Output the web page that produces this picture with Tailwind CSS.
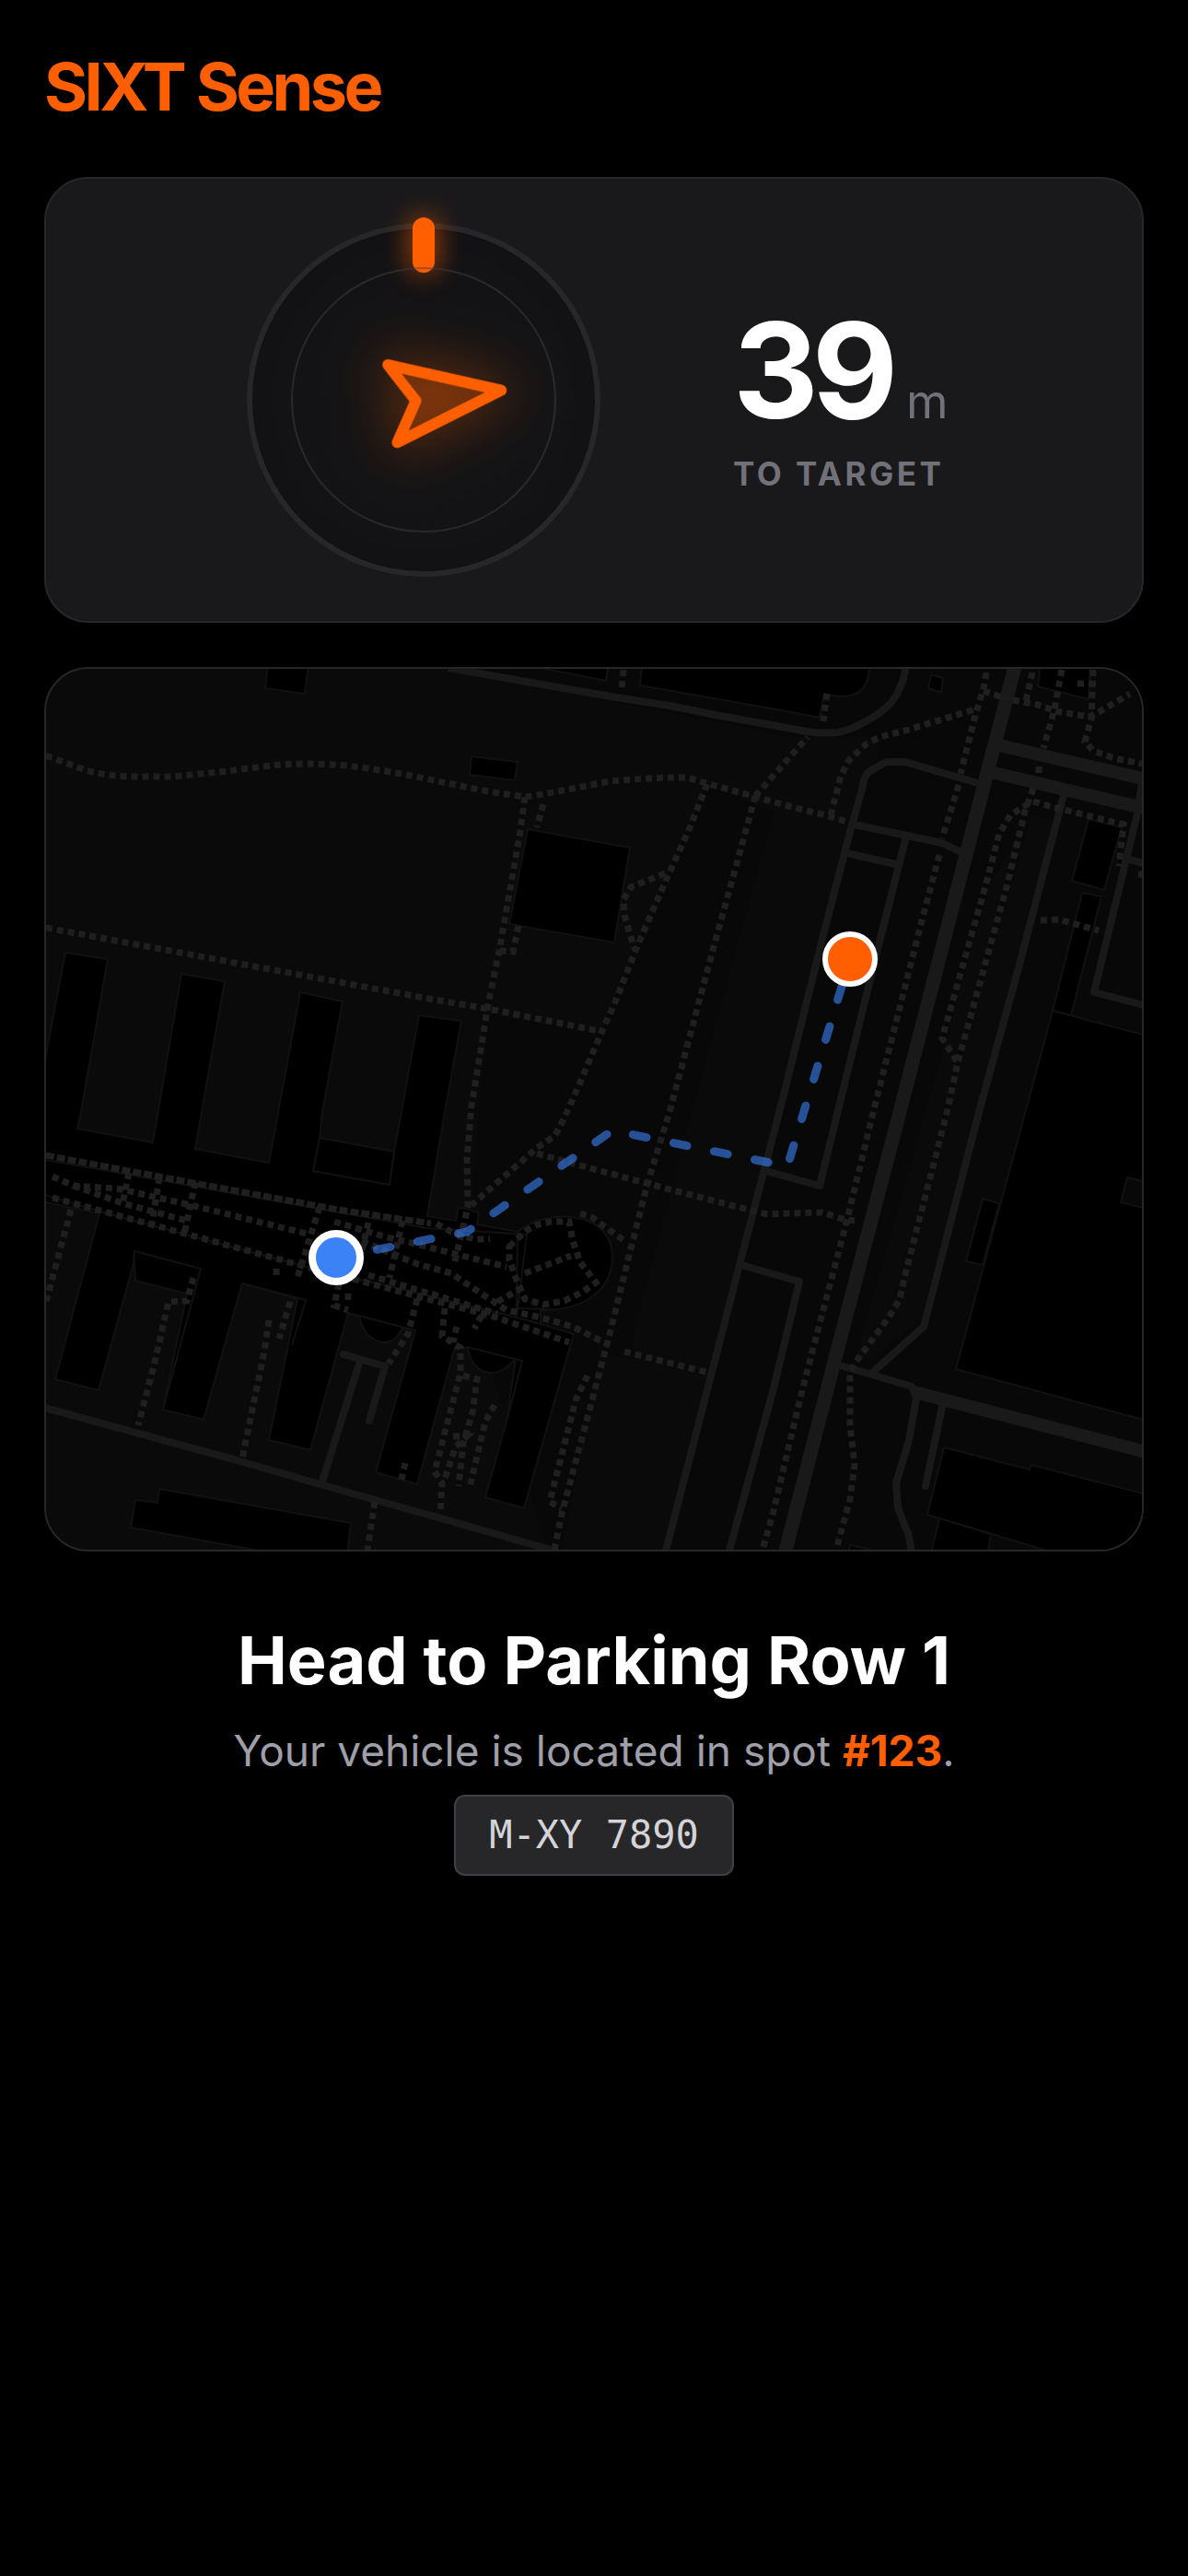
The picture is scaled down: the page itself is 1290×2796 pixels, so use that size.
<!DOCTYPE html>
<html lang="en">
<head>
    <meta charset="UTF-8">
    <meta name="viewport" content="width=device-width, initial-scale=1.0">
    <title>SIXT Sense</title>
    <script src="https://cdn.jsdelivr.net/npm/@tailwindcss/browser@4"></script>
</head>
<body class="min-h-screen bg-black p-12 font-[Inter,'Liberation_Sans',sans-serif] text-white">

    <header>
        <h1 class="text-[72px] leading-23 font-bold tracking-tighter text-[#ff5f00]">SIXT Sense</h1>
    </header>

    <main class="mt-13">

        <!-- Compass card -->
        <section class="flex items-center justify-center gap-36 rounded-[48px] border-2 border-[#27272a] bg-[#19191b] p-12">
            <div class="relative flex size-96 items-center justify-center rounded-full border-6 border-[#27272a] bg-[#131315] shadow-[inset_0_0_24px_rgba(0,0,0,0.12)]">
                <div class="absolute -top-3 h-15 w-6 rounded-full bg-[#ff5f00] shadow-[0_0_30px_rgba(255,95,0,0.8)]"></div>
                <div class="absolute size-72 rounded-full border-2 border-[#3f3f46]/50"></div>
                <svg class="size-36 rotate-[38deg] overflow-visible text-[#ff5f00] drop-shadow-[0_0_30px_rgba(255,95,0,0.6)]" viewBox="0 0 24 24" fill="currentColor" fill-opacity="0.25" stroke="currentColor" stroke-width="2" stroke-linecap="round" stroke-linejoin="round" aria-hidden="true">
                    <polygon points="3 11 22 2 13 21 11 13 3 11" />
                </svg>
            </div>
            <div class="w-[226px]">
                <p class="flex items-baseline gap-4 whitespace-nowrap">
                    <span class="text-[144px] leading-36 font-bold tracking-tighter">39</span>
                    <span class="text-[52px] leading-15 text-[#71717a]">m</span>
                </p>
                <p class="mt-4 text-[35px] leading-12 font-bold tracking-widest whitespace-nowrap text-[#71717a]">TO TARGET</p>
            </div>
        </section>

        <!-- Map -->
        <section class="relative mt-12 h-[960px] overflow-hidden rounded-[48px] border-2 border-[#27272a] bg-[#0a0a0a]">
            <svg class="size-full" viewBox="50 726 1190 956" preserveAspectRatio="xMidYMid slice" fill="none" role="img" aria-label="Map with the route to the vehicle">
                <!-- paved ground -->
                <g fill="#080808">
                    <path d="M768 853L840 882 745 1230 690 1440 650 1700H600L520 1440 512 1310 528 1100 650 1122Z" />
                    <path d="M487 726L860 800 960 800 920 900 850 1190 720 1690H1240V726Z" />
                </g>
                <g fill="#0a0a0a">
                    <path d="M1120 885L1148 890 1000 1430 948 1475Z" />
                    <path d="M1075 960L1120 880 1090 965 1030 1190 950 1480 930 1470Z" />
                    <path d="M725 1340L775 1352 745 1470 697 1460Z" />
                    <path d="M650 1470L740 1480 695 1682H610Z" />
                </g>

                <!-- buildings -->
                <g fill="#000" stroke="#111111" stroke-width="2">
                    <path d="M291 720L288 747 331 753 335 720Z" />
                    <path d="M512 821L562 827 559 847 510 841Z" />
                    <path d="M573 900L684 920 667 1023 553 1003Z" />
                    <path d="M587 725L658 739 661 720Z" />
                    <path d="M697 720L695 744 860 773 890 779 895 753Q945 766 944 720Z" />
                    <path d="M1011 732L1024 736 1022 752 1008 747Z" />
                    <path d="M1130 720L1127 745 1182 759 1184 720Z" />
                    <path d="M1182 889L1218 898 1199 966 1164 956Z" />
                    <path d="M1175 969L1196 973 1163 1102 1143 1097Z" />
                    <path d="M1143 1097L1245 1124V1283L1224 1278 1217 1305 1245 1312V1542L1038 1486Z" />
                    <path d="M1067 1301L1085 1306 1067 1373 1049 1369Z" />
                    <path d="M1025 1571L1118 1595 1120 1590 1245 1622V1690H1160L1007 1644Z" />
                    <path d="M1020 1648L1076 1665 1072 1690H1010Z" />
                    <path d="M923 1677L955 1684 920 1690Z" />
                    <path d="M173 1616L381 1653 377 1690H320L142 1658 147 1628 171 1631Z" />
                    <path d="M45 1170L71 1034 117 1041 88 1207 84 1225 166 1240 197 1057 244 1065 219 1207 212 1247 292 1262 326 1077 372 1087 350 1207 347 1235 428 1250 455 1102 501 1108 483 1207 464 1320 495 1325 498 1310 520 1316 518 1329 562 1337C590 1312 664 1312 665 1363C665 1410 620 1423 587 1422V1437L623 1448 569 1637 527 1625 550 1543 560 1474Q548 1490 532 1490Q512 1488 508 1463L494 1462 453 1611 408 1598 451 1444 437 1441Q430 1457 417 1457Q396 1455 390 1429L378 1425 337 1574 292 1563 323 1410 263 1393 221 1541 177 1530 203 1404 147 1390 146 1368 107 1509 60 1497 108 1317 45 1304Z" />
                    <path d="M347 1235L340 1271 423 1286 428 1250M45 1258L464 1333 572 1340 561 1430M45 1296L120 1318 340 1377 440 1400 561 1430 587 1437M562 1337L561 1420 597 1421M145 1370L146 1358 218 1377 177 1530M263 1393L332 1411 317 1460M378 1425L451 1444M507 1462L567 1477 550 1543" fill="none" />
                </g>

                <!-- streets -->
                <g stroke="#191919" stroke-width="8" stroke-linejoin="round">
                    <path d="M487 725L663 756 727 766 777 776 860 791 883 795Q899 796 910 795Q925 792 940 783Q955 775 963 767Q973 758 977 747Q983 735 984 720" />
                    <path d="M1065 851L983 827H962L943 838Q937 845 937 853L923 903 897 1003 848 1200 803 1373 722 1687" />
                    <path d="M923 894L1023 915 1050 928M920 926L977 939" />
                    <path d="M984 908L953 1030 890 1287 828 1270" />
                    <path d="M805 1373L868 1391 840 1507 790 1690" />
                    <path d="M1155 863L1107 1047 1063 1207 1003 1440 947 1490" />
                    <path d="M1240 850L1235 883 1188 1077 1245 1092M1227 933L1245 938" />
                    <path d="M908 1481L947 1492 990 1505 995 1517 987 1563 973 1610 975 1637 987 1667 990 1687" />
                    <path d="M45 1527L257 1585 407 1628 440 1637 605 1684" />
                    <path d="M1023 1527L1005 1613M350 1608L390 1480M373 1470L418 1483 401 1542" stroke-linecap="round" />
                    <path d="M1103 720L1075 827 977 1207 908 1470 852 1687" stroke-width="15" />
                    <path d="M1085 809L1245 846M1076 838L1245 878M993 1511L1245 1576" stroke-width="14" />
                </g>

                <!-- footpaths -->
                <g stroke="#1f1f1f" stroke-width="7" stroke-dasharray="7 5">
                    <path d="M50 820L93 836Q115 842 140 843H187L247 837 293 831Q330 827 377 831L413 836 447 842 495 852 530 859 570 865 590 862 627 855 662 848 687 846 720 844H747L770 851 817 864 860 876 897 885 923 893" />
                    <path d="M570 865L565 902 550 987 542 1032 530 1090 522 1140 512 1200 507 1257 508 1310 493 1373M590 873L583 898M563 1005L557 1033 542 1032" />
                    <path d="M50 1007L460 1083 530 1095 650 1119" />
                    <path d="M768 851L747 903 722 958 692 1027 667 1090 652 1123 632 1170 618 1202 607 1225 602 1233 583 1246 512 1308" />
                    <path d="M722 948L685 963 677 977 678 993 685 1017 689 1030" />
                    <path d="M820 864L813 890 773 1035 727 1207 703 1285 685 1355 662 1448 650 1493 610 1643 602 1682" />
                    <path d="M820 864L845 836 877 800M898 753L894 783M677 727L675 747" />
                    <path d="M902 885L913 842 922 825 940 808 955 800 983 793 1052 772 1063 768" />
                    <path d="M1071 730L1068 747 1060 773 1043 840M1041 852L1023 910M1020 928L1000 1003 949 1204 920 1323 870 1513 840 1640 828 1682" />
                    <path d="M1068 750L1092 758M1100 760L1127 765 1147 772 1183 778 1193 773 1227 753" />
                    <path d="M1121 730L1113 765M1153 727L1145 770 1133 812M1128 832V840M1122 856L1113 880 1093 963 1040 1153 1029 1204 983 1383 977 1410 965 1430 928 1480 923 1490V1547L928 1590 923 1627 908 1682" />
                    <path d="M1187 727L1185 780 1178 805 1187 815 1210 823 1240 829M1170 742H1187" />
                    <path d="M1122 870L1140 875 1220 895 1215 940M1236 949H1240" />
                    <path d="M1117 872L1097 885 1085 905 1070 962 1023 1127 1040 1153M1130 999L1150 998 1193 1010" />
                    <path d="M583 1252L630 1265 712 1287 813 1313 833 1318 857 1317 893 1316 918 1324 930 1325" />
                    <path d="M630 1317L642 1321 680 1348M678 1467L770 1490" />
                    <path d="M553 1353L570 1337Q585 1326 603 1326H618L622 1347 630 1370 647 1392 633 1402 613 1412 590 1416 570 1410 560 1387 553 1367ZM570 1382L620 1363M540 1413L563 1400" />
                    <path d="M57 1277L80 1287 127 1290 207 1308 333 1339M363 1326L420 1343 447 1349 490 1360 550 1375" />
                    <path d="M57 1300L120 1317 223 1345 340 1377M80 1287L133 1306 203 1325" />
                    <path d="M393 1347L453 1372 490 1382 527 1407 550 1422 587 1430 622 1440 662 1460" />
                    <path d="M383 1388L457 1408 533 1428 618 1457M400 1384L540 1426" />
                    <path d="M140 1273L133 1307M173 1278L165 1328M212 1283L200 1340M347 1310L322 1390M437 1325L423 1387M400 1327L393 1357" />
                    <path d="M77 1313L50 1413M210 1387L203 1412 183 1413 167 1483 150 1547M315 1413L303 1453M292 1433L287 1467 263 1583M407 1630L399 1682" />
                    <path d="M453 1410L443 1448 422 1480M368 1393L363 1417 378 1422M378 1404V1412M300 1377V1384" />
                    <path d="M483 1420L480 1450 500 1463V1490L472 1597 480 1610 478 1643M496 1440L492 1457M523 1428L515 1442" />
                    <path d="M503 1493L518 1497 513 1533 503 1567 498 1613M537 1525L527 1543 510 1615M492 1559H507L495 1570 482 1608" />
                    <path d="M638 1493L625 1520 597 1630 610 1637M474 1328L490 1337 515 1345 532 1345M440 1588L436 1606" />
                </g>
                <path d="M50 1254L140 1271 367 1313 468 1328" stroke="#1f1f1f" stroke-width="7" stroke-dasharray="9 3" />

                <!-- route -->
                <path d="M365 1365L507 1337 665 1227 855 1266 923 1041" stroke="#3b82f6" stroke-opacity="0.6" stroke-width="9" stroke-linecap="round" stroke-linejoin="round" stroke-dasharray="15 30" />
                <circle cx="365" cy="1365" r="26" fill="#3b82f6" stroke="#fff" stroke-width="8" />
                <circle cx="923" cy="1041" r="27" fill="#ff5f00" stroke="#fff" stroke-width="6" />
            </svg>
        </section>

        <!-- Instructions -->
        <section class="mt-[78px] flex flex-col items-center text-center">
            <h2 class="text-[72px] leading-20 font-bold">Head to Parking Row 1</h2>
            <p class="mt-5 text-[46px] leading-19 text-[#9f9fa9]">Your vehicle is located in spot <span class="font-bold text-[#ff5f00]">#123</span>.</p>
            <div class="mt-[10px] rounded-xl border-2 border-[#3f3f46] bg-[#27272a] px-9 py-3 font-['DejaVu_Sans_Mono','Liberation_Mono',monospace] text-[42px] leading-15 text-[#d4d4d8]">M-XY 7890</div>
        </section>
    </main>

</body>
</html>
